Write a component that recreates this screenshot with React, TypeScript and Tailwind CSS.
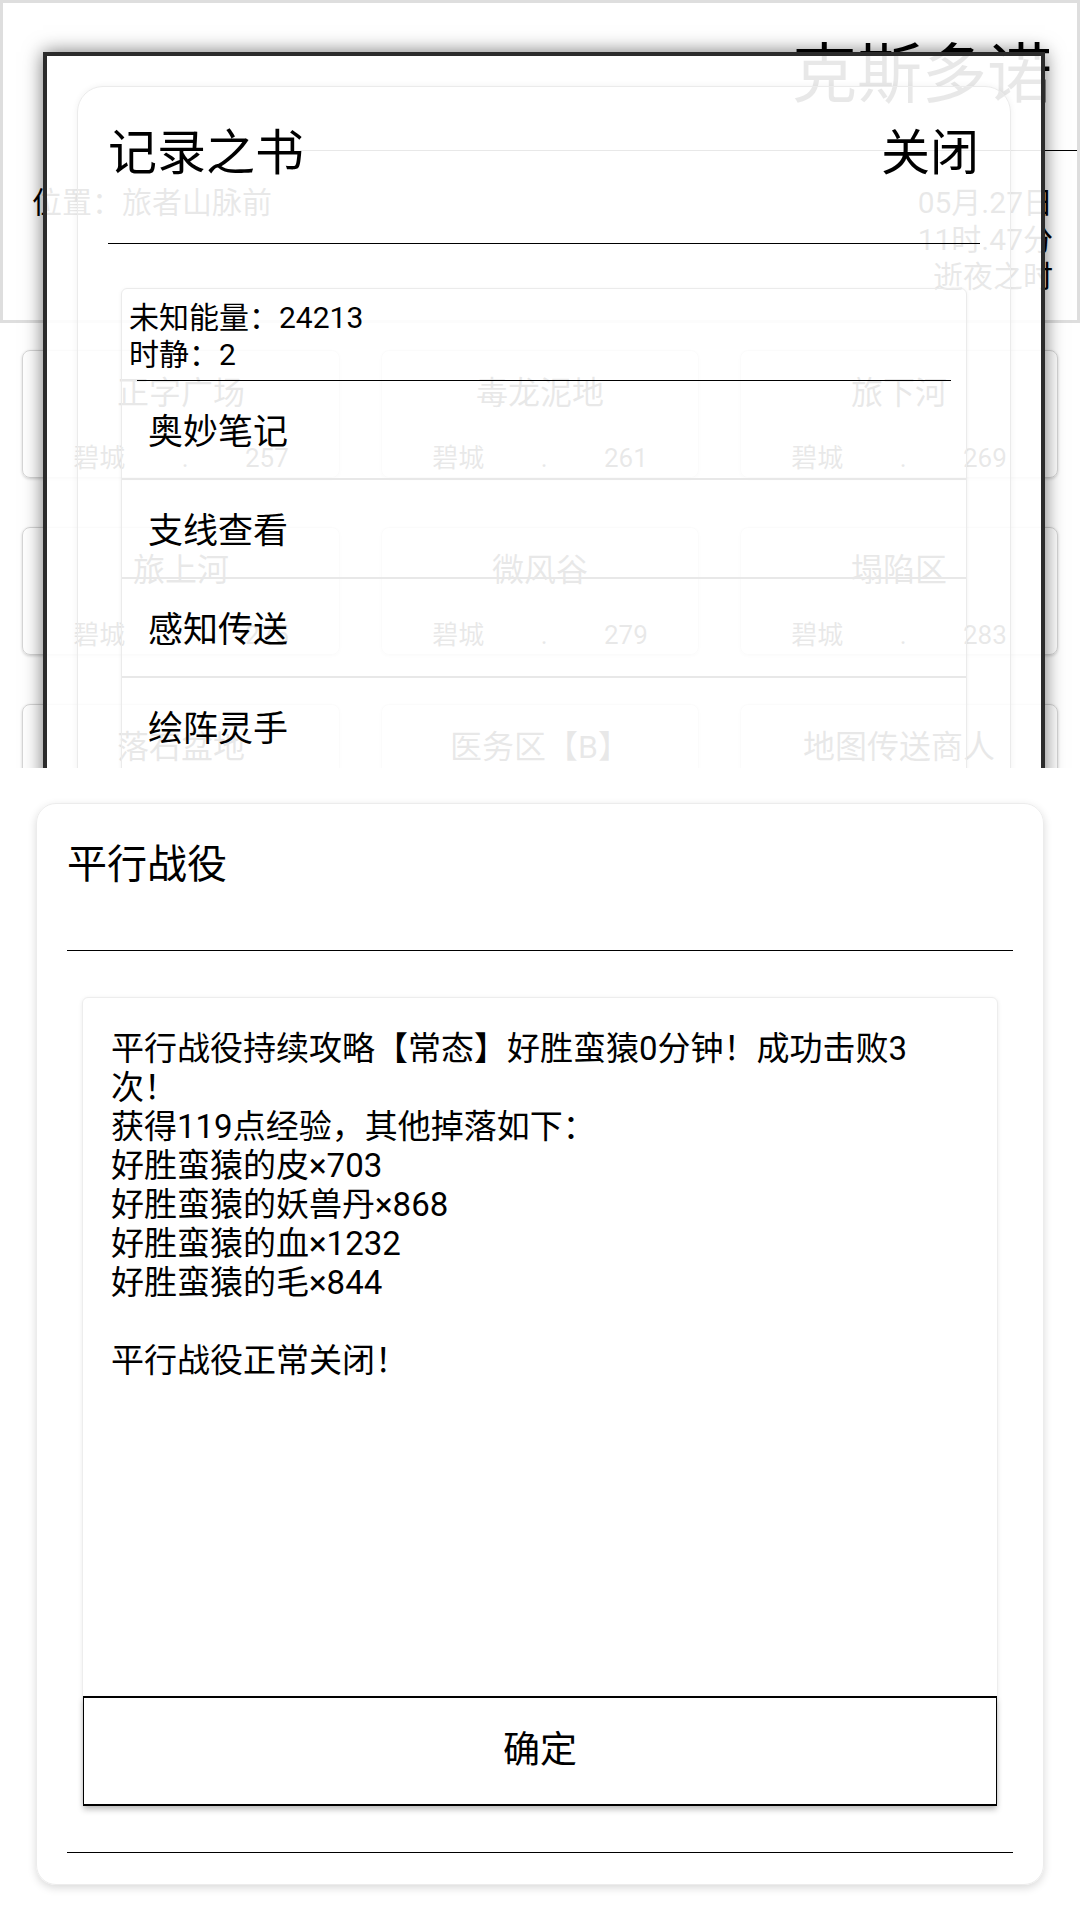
import React from 'react';

const places = [
  { name: '正字广场', city: '碧城', no: '257' },
  { name: '毒龙泥地', city: '碧城', no: '261' },
  { name: '旅下河', city: '碧城', no: '269' },
  { name: '旅上河', city: '碧城', no: '275' },
  { name: '微风谷', city: '碧城', no: '279' },
  { name: '塌陷区', city: '碧城', no: '283' },
  { name: '落石盆地', city: '碧城', no: '287' },
  { name: '医务区【B】', city: '碧城', no: '291' },
  { name: '地图传送商人', city: '碧城', no: '295' },
];

const menu = ['奥妙笔记', '支线查看', '感知传送', '绘阵灵手'];

const report = `平行战役持续攻略【常态】好胜蛮猿0分钟！成功击败3次！
获得119点经验，其他掉落如下：
好胜蛮猿的皮×703
好胜蛮猿的妖兽丹×868
好胜蛮猿的血×1232
好胜蛮猿的毛×844

平行战役正常关闭！`;

const PlaceCard = ({ name, city, no }: { name: string; city: string; no: string }) => (
  <div className="h-[128px] rounded-lg border border-[#d6d6d6] pt-[22px] text-center shadow-[0_1px_3px_rgba(0,0,0,0.18)]">
    <div className="text-[32px] leading-[40px]">{name}</div>
    <div className="mx-auto mt-[28px] flex w-[272px] justify-around text-[26px] leading-[34px]">
      <span>{city}</span>
      <span>.</span>
      <span>{no}</span>
    </div>
  </div>
);

export default function App() {
  return (
    <div className="h-[1920px] w-[1080px] bg-white text-black font-['Roboto','Noto_Sans_CJK_SC',sans-serif]">
      {/* 上半部分：地图页 + 记录之书弹窗，截在768px */}
      <div className="relative h-[768px] overflow-hidden">
        <div className="h-[323px] border-[3px] border-[#dedede] bg-white">
          <div className="pr-[25px] pt-[37px] text-right text-[65px] leading-[70px]">克斯多诺</div>
          <div className="ml-[297px] mt-[40px] h-px bg-black" />
          <div className="mt-[33px] flex items-start justify-between pl-[29px] pr-[24px]">
            <div className="mt-px text-[30px] leading-[36px]">位置：旅者山脉前</div>
            <div className="text-right text-[30px] leading-[37px]">
              <div>05月.27日</div>
              <div>11时.47分</div>
              <div>逝夜之时</div>
            </div>
          </div>
        </div>

        <div className="mt-[27px] grid grid-cols-3 gap-x-[41px] gap-y-[49px] px-[22px]">
          {places.map((p) => (
            <PlaceCard key={p.name} {...p} />
          ))}
        </div>

        <div className="absolute left-[43px] top-[52px] h-[900px] w-[1002px] border-4 border-[#2b2b2b] bg-white/[0.91] p-[30px] shadow-[0_0_18px_rgba(0,0,0,0.55)]">
          <div className="h-[900px] rounded-[26px] border border-[#ebebeb] px-[30px] shadow-[0_0_6px_rgba(0,0,0,0.06)]">
            <div className="flex items-center justify-between pb-[53px] pl-0 pr-[1px] pt-[31px] text-[49px] leading-[72px]">
              <span>记录之书</span>
              <span>关闭</span>
            </div>
            <div className="h-px bg-black" />

            <div className="mx-[13px] mt-[44px] rounded-md border border-[#ebebeb] shadow-[0_1px_4px_rgba(0,0,0,0.06)]">
              <div className="pl-[7px] pt-[10px] text-[30px] leading-[37px]">
                <div>未知能量：24213</div>
                <div>时静：2</div>
              </div>
              <div className="mx-[15px] mt-[7px] h-px bg-black" />
              {menu.map((m) => (
                <div key={m} className="flex h-[99px] items-center border-b-2 border-[#e8e8e8] pl-[26px] pt-[7px] text-[35px]">
                  {m}
                </div>
              ))}
            </div>
          </div>
        </div>
      </div>

      {/* 平行战役结果 */}
      <div className="mx-[36px] mt-[35px] rounded-[20px] border border-[#ececec] px-[30px] shadow-[0_3px_8px_rgba(0,0,0,0.15)]">
        <div className="pb-[55px] pl-0 pt-[31px] text-[40px] leading-[60px]">平行战役</div>
        <div className="h-px bg-black" />
        <div className="mx-[15px] mt-[46px] flex h-[810px] flex-col rounded-md border border-[#ededed] shadow-[0_1px_4px_rgba(0,0,0,0.08)]">
          <div className="flex-1 whitespace-pre-line pl-[28px] pr-[72px] pt-[31px] text-[33px] leading-[39px]">
            {report}
          </div>
          <div className="flex h-[110px] items-center justify-center border border-b-2 border-t-2 border-black text-[37px] shadow-[0_4px_6px_rgba(0,0,0,0.2)]">
            确定
          </div>
        </div>
        <div className="mt-[45px] h-px bg-black" />
        <div className="h-[31px]" />
      </div>
    </div>
  );
}
